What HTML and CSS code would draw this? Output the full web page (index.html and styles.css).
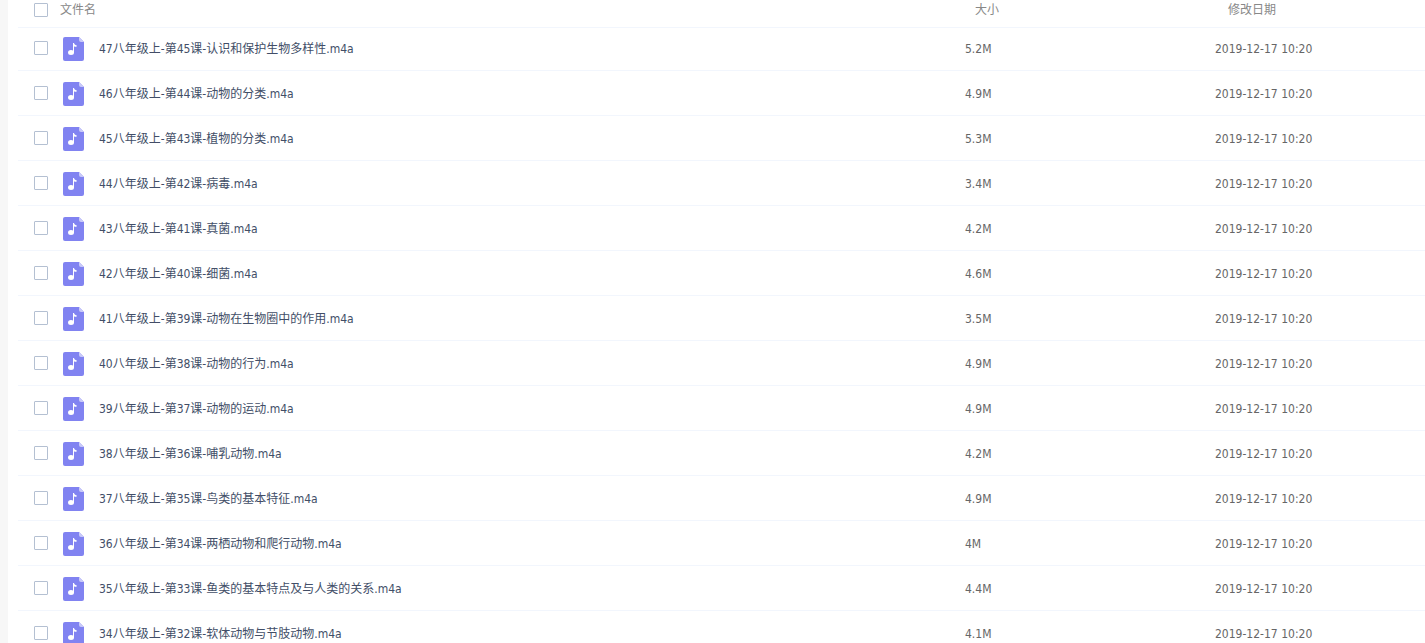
FILE: index.html
```html
<!DOCTYPE html>
<html lang="zh-CN">
<head>
    <meta charset="utf-8">
    <title>文件列表</title>
    <meta name="viewport" content="width=device-width, initial-scale=1">
    <link rel="stylesheet" href="styles.css">
</head>
<body>
    <svg class="sprite" aria-hidden="true">
        <symbol id="audio" viewBox="0 0 21 24">
            <path fill="#8183f1" d="M2 0h14l5 5v17a2 2 0 0 1-2 2H2a2 2 0 0 1-2-2V2a2 2 0 0 1 2-2z"/>
            <path fill="#c9caf9" d="M16 0l5 5h-3a2 2 0 0 1-2-2z"/>
            <ellipse cx="8" cy="15.500" rx="3" ry="2.500" fill="#fff"/>
            <path fill="#fff" d="M10 6h1c.2 1.300 1 1.900 2.800 2.400L13.500 9.800c-1 .1-1.900-.1-2.500-.6v6.300h-1z"/>
        </symbol>
    </svg>

    <main class="panel">
        <table class="file-list">
            <thead>
                <tr>
                    <th class="check"><input type="checkbox" id="checkAll" aria-label="全选"></th>
                    <th class="name">文件名</th>
                    <th class="size">大小</th>
                    <th class="date">修改日期</th>
                </tr>
            </thead>
            <tbody id="files"></tbody>
        </table>
    </main>

    <script src="script.js"></script>
</body>
</html>
```
FILE: styles.css
```css
body {
    margin: 0;
    background-color: #f7f7f7;
    font-family: "DejaVu Sans Condensed", "Noto Sans CJK SC", sans-serif;
    font-size: 12px;
    line-height: 24px;
    color: #424e67;
    overflow: hidden;
}
.sprite {
    display: none;
}
.panel {
    margin-left: 8px;
    padding-left: 10px;
    background-color: #fff;
}
.file-list {
    width: 100%;
    table-layout: fixed;
    border-collapse: separate;
    border-spacing: 0;
}
th, td {
    padding: 11px 0 9px;
    border-bottom: 1px solid #f2f6fd;
    text-align: left;
    white-space: nowrap;
}
tbody tr:first-child td {
    padding-top: 9px;
}
th {
    height: 24px;
    padding: 0 0 3px;
    font-weight: normal;
    line-height: 20px;
    color: #888;
    vertical-align: top;
}
.check {
    width: 42px;
}
td.size, td.date {
    color: #666;
}
th.size {
    padding-left: 10px;
    width: 240px;
}
th.date {
    padding-left: 13px;
    width: 197px;
}
input {
    display: block;
    appearance: none;
    width: 14px;
    height: 14px;
    margin: 0 0 2px 16px;
    border: 1px solid #b4c0d2;
    border-radius: 1px;
    background-color: #fff;
}
th input {
    margin-top: 3px;
}
input:checked {
    background-color: #8183f1;
}
.file {
    display: flex;
    align-items: center;
    gap: 15px;
    padding-left: 3px;
}
.icon {
    width: 21px;
    height: 24px;
}
label:hover {
    color: #8183f1;
}
```
FILE: script.js
```js
var files = [
    ["47八年级上-第45课-认识和保护生物多样性.m4a", "5.2M"],
    ["46八年级上-第44课-动物的分类.m4a", "4.9M"],
    ["45八年级上-第43课-植物的分类.m4a", "5.3M"],
    ["44八年级上-第42课-病毒.m4a", "3.4M"],
    ["43八年级上-第41课-真菌.m4a", "4.2M"],
    ["42八年级上-第40课-细菌.m4a", "4.6M"],
    ["41八年级上-第39课-动物在生物圈中的作用.m4a", "3.5M"],
    ["40八年级上-第38课-动物的行为.m4a", "4.9M"],
    ["39八年级上-第37课-动物的运动.m4a", "4.9M"],
    ["38八年级上-第36课-哺乳动物.m4a", "4.2M"],
    ["37八年级上-第35课-鸟类的基本特征.m4a", "4.9M"],
    ["36八年级上-第34课-两栖动物和爬行动物.m4a", "4M"],
    ["35八年级上-第33课-鱼类的基本特点及与人类的关系.m4a", "4.4M"],
    ["34八年级上-第32课-软体动物与节肢动物.m4a", "4.1M"]
];

document.getElementById("files").innerHTML = files.map(function (file, i) {
    return '<tr>' +
        '<td class="check"><input type="checkbox" id="file' + i + '"></td>' +
        '<td class="name"><div class="file"><svg class="icon" aria-hidden="true"><use href="#audio"/></svg>' +
        '<label for="file' + i + '">' + file[0] + '</label></div></td>' +
        '<td class="size">' + file[1] + '</td>' +
        '<td class="date">2019-12-17 10:20</td>' +
        '</tr>';
}).join("");

document.getElementById("checkAll").onchange = function () {
    var boxes = document.querySelectorAll("#files input");
    for (var i = 0; i < boxes.length; i++) {
        boxes[i].checked = this.checked;
    }
};
```
